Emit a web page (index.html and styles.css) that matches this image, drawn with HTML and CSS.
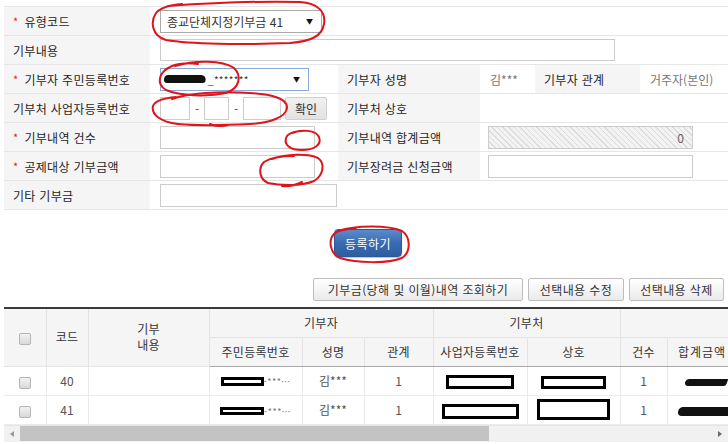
FILE: index.html
```html
<!DOCTYPE html>
<html lang="ko">
<head>
<meta charset="utf-8">
<title>기부금 입력</title>
<link rel="stylesheet" href="styles.css">
</head>
<body>
<div class="page">
  <table class="form">
    <colgroup>
      <col class="w-l1"><col class="w-v1"><col class="w-l2"><col class="w-v2"><col class="w-l3"><col class="w-v3">
    </colgroup>
    <tr class="r-first">
      <th><span class="req">*</span>유형코드</th>
      <td colspan="5"><div class="sel sel-type"><span>종교단체지정기부금 41</span><span class="arr">▼</span></div></td>
    </tr>
    <tr>
      <th>기부내용</th>
      <td colspan="5"><input class="inp inp-content" type="text"></td>
    </tr>
    <tr>
      <th><span class="req">*</span>기부자 주민등록번호</th>
      <td><div class="sel sel-id focus"><span class="redact-scribble"></span><span class="mask">_*******</span><span class="arr">▼</span></div></td>
      <th>기부자 성명</th>
      <td class="val">김***</td>
      <th>기부자 관계</th>
      <td class="val">거주자(본인)</td>
    </tr>
    <tr>
      <th>기부처 사업자등록번호</th>
      <td>
        <div class="bizno">
          <input class="inp b1" type="text"><span class="dash">-</span><input class="inp b2" type="text"><span class="dash">-</span><input class="inp b3" type="text"><button class="btn-chk">확인</button>
        </div>
      </td>
      <th>기부처 상호</th>
      <td colspan="3"></td>
    </tr>
    <tr>
      <th><span class="req">*</span>기부내역 건수</th>
      <td><input class="inp inp-mid" type="text"></td>
      <th>기부내역 합계금액</th>
      <td colspan="3" class="right-val"><div class="inp inp-right disabled">0</div></td>
    </tr>
    <tr>
      <th><span class="req">*</span>공제대상 기부금액</th>
      <td><input class="inp inp-mid" type="text"></td>
      <th>기부장려금 신청금액</th>
      <td colspan="3" class="right-val"><input class="inp inp-right" type="text"></td>
    </tr>
    <tr>
      <th>기타 기부금</th>
      <td colspan="5"><input class="inp inp-etc" type="text"></td>
    </tr>
  </table>

  <div class="submit-wrap"><button class="btn-primary">등록하기</button></div>

  <div class="actions">
    <button class="btn btn-wide">기부금(당해 및 이월)내역 조회하기</button>
    <button class="btn btn-edit">선택내용 수정</button>
    <button class="btn btn-del">선택내용 삭제</button>
  </div>

  <div class="grid-wrap">
    <table class="grid">
      <colgroup>
        <col class="g-chk"><col class="g-code"><col class="g-cont"><col class="g-id"><col class="g-name"><col class="g-rel"><col class="g-biz"><col class="g-corp"><col class="g-cnt"><col class="g-sum"><col class="g-ded"><col class="g-app"><col class="g-etc">
      </colgroup>
      <thead>
        <tr>
          <th rowspan="2"><span class="cb"></span></th>
          <th rowspan="2">코드</th>
          <th rowspan="2" class="two-line">기부<br>내용</th>
          <th colspan="3">기부자</th>
          <th colspan="2">기부처</th>
          <th colspan="4">기부내역</th>
          <th rowspan="2">비고</th>
        </tr>
        <tr>
          <th>주민등록번호</th>
          <th>성명</th>
          <th>관계</th>
          <th>사업자등록번호</th>
          <th>상호</th>
          <th>건수</th>
          <th class="sum-h">합계금액</th>
          <th>공제대상금액</th>
          <th>기부장려금</th>
        </tr>
      </thead>
      <tbody>
        <tr>
          <td><span class="cb"></span></td>
          <td>40</td>
          <td></td>
          <td><span class="idcell"><span class="box box-id1"></span><span class="dots">-***···</span></span></td>
          <td>김***</td>
          <td>1</td>
          <td><span class="box box-biz1"></span></td>
          <td><span class="box box-corp1"></span></td>
          <td>1</td>
          <td class="sumcell"><span class="scrib scrib1"></span></td>
          <td></td><td></td><td></td>
        </tr>
        <tr>
          <td><span class="cb"></span></td>
          <td>41</td>
          <td></td>
          <td><span class="idcell"><span class="box box-id2"></span><span class="dots">-***···</span></span></td>
          <td>김***</td>
          <td>1</td>
          <td><span class="box box-biz2"></span></td>
          <td><span class="box box-corp2"></span></td>
          <td>1</td>
          <td class="sumcell"><span class="scrib scrib2"></span></td>
          <td></td><td></td><td></td>
        </tr>
      </tbody>
    </table>
  </div>

  <div class="hscroll">
    <span class="sarrow left"></span>
    <div class="track"><div class="thumb"></div></div>
    <span class="sarrow right"></span>
  </div>

  <svg class="marks" width="728" height="444" viewBox="0 0 728 444">
    <g fill="none" stroke="#e0141b" stroke-width="2" stroke-linecap="round">
      <path d="M168 6 C210 3 262 1 300 2 C318 3 326 12 324 24 C322 36 312 41 290 43 C240 45 190 44 166 40 C152 36 150 22 156 13 C160 8 170 5 182 4"/>
      <path d="M175 66 C195 60 222 60 234 68 C242 76 240 88 226 93 C208 97 180 96 166 90 C156 84 158 72 172 66 C180 63 190 63 198 64"/>
      <path d="M172 99 C188 93 220 91 250 93 C272 94 288 99 287 108 C286 117 270 123 250 124 C230 125 200 126 178 124 C160 122 151 114 153 106 C155 100 166 98 176 97 M210 124 C214 126 222 127 228 125"/>
      <path d="M292 133 C302 129 316 130 319 137 C322 145 314 150 302 150 C290 150 284 145 286 138 C287 134 292 132 300 131"/>
      <path d="M272 159 C286 154 308 153 318 158 C325 163 324 175 314 181 C302 186 282 186 268 183 C259 179 258 168 264 162 C270 158 282 156 294 156 M282 186 C290 187 298 184 302 182"/>
      <path d="M338 231 C356 225 388 225 402 231 C411 237 411 252 402 258 C388 264 356 263 340 258 C330 254 328 240 334 234 C338 230 346 229 356 228"/>
    </g>
  </svg>
</div>
</body>
</html>
```

FILE: styles.css
```css
* { box-sizing: border-box; }

html, body {
  margin: 0;
  padding: 0;
  background: #ffffff;
}

body {
  font-family: "Noto Sans CJK KR", "Noto Sans", "Liberation Sans", sans-serif;
  font-size: 12px;
  color: #333;
  width: 728px;
  height: 444px;
  overflow: hidden;
}

.page {
  position: relative;
  padding: 6px 0 0 4px;
}

/* ---------- form ---------- */
.form {
  width: 724px;
  table-layout: fixed;
  border-collapse: collapse;
}
.w-l1 { width: 146px; }
.w-v1 { width: 188px; }
.w-l2 { width: 142px; }
.w-v2 { width: 55px; }
.w-l3 { width: 105px; }
.w-v3 { width: 88px; }

.form tr { height: 29px; }
.form th, .form td {
  padding: 0;
  border-top: 1px solid #e6e6e6;
  border-bottom: 1px solid #e6e6e6;
  text-align: left;
  vertical-align: middle;
  font-weight: normal;
  white-space: nowrap;
}
.form th {
  background: #f5f5f5;
  padding-left: 9px;
  color: #1f1f1f;
  letter-spacing: 0.3px;
}
.form td { padding-left: 10px; }
.form td.val { color: #777; padding-left: 10px; }
.form td.right-val { padding-left: 8px; }

.req {
  color: #d4262b;
  font-size: 11px;
  margin-right: 6px;
  display: inline-block;
  transform: translateY(-1px);
}

.inp {
  height: 23px;
  border: 1px solid #cccccc;
  background: #fff;
  font: inherit;
  padding: 0 4px;
  display: inline-block;
  vertical-align: middle;
}
.inp-content { width: 455px; height: 22px; }
.inp-mid { width: 155px; }
.inp-etc { width: 177px; }
.inp-right { width: 205px; }
.disabled {
  background: repeating-linear-gradient(45deg, #dcdcdc 0 1px, #f3f3f3 1px 4px);
  text-align: right;
  padding-right: 8px;
  line-height: 21px;
  color: #666;
}

.sel {
  height: 23px;
  border: 1px solid #aaaaaa;
  background: #fff;
  display: flex;
  align-items: center;
  padding: 0 8px 0 6px;
  color: #333;
}
.sel .arr { margin-left: auto; font-size: 7px; color: #111; }
.sel-type { width: 162px; }
.sel-id { width: 149px; padding-left: 3px; }
.sel.focus { border-color: #86a9d6; }
.redact-scribble {
  width: 42px;
  height: 8px;
  background: #111;
  border-radius: 3px 6px 2px 4px;
  transform: skewX(-15deg);
}
.mask { font-size: 10px; margin-left: 2px; letter-spacing: 0.3px; }

.bizno { display: flex; align-items: center; }
.bizno .b1 { width: 30px; }
.bizno .b2 { width: 25px; }
.bizno .b3 { width: 38px; }
.dash { width: 14px; text-align: center; color: #555; }
.btn-chk {
  margin-left: 4px;
  width: 42px;
  height: 23px;
  border: 1px solid #cfcfcf;
  background: linear-gradient(#f0f0f0, #e2e2e2);
  border-radius: 2px;
  font: inherit;
  color: #333;
  padding: 0;
}

/* ---------- buttons ---------- */
.submit-wrap {
  display: flex;
  justify-content: center;
  padding: 19px 0 0 0;
  margin-left: -4px;
}
.btn-primary {
  width: 68px;
  height: 28px;
  margin-left: 8px;
  border: 1px solid #2c5a98;
  border-radius: 4px;
  background: linear-gradient(#5a8ccc, #3a6bb0 50%, #2f5e9f);
  color: #fff;
  font: inherit;
  letter-spacing: 0.5px;
  box-shadow: 0 1px 1px rgba(0,0,0,0.25);
  padding: 0;
}

.actions {
  display: flex;
  justify-content: flex-end;
  gap: 5px;
  padding: 21px 4px 0 0;
}
.btn {
  height: 23px;
  padding: 0;
  border: 1px solid #bdbdbd;
  border-radius: 2px;
  background: linear-gradient(#ffffff, #eaeaea);
  font: inherit;
  color: #333;
  letter-spacing: 0.4px;
  white-space: nowrap;
}
.btn-wide { width: 210px; }
.btn-edit { width: 96px; }
.btn-del { width: 95px; }

/* ---------- grid ---------- */
.grid-wrap {
  margin-top: 6px;
  width: 724px;
  overflow: hidden;
}
.grid {
  width: 1062px;
  table-layout: fixed;
  border-collapse: collapse;
  border-top: 2px solid #3a3a3a;
}
.g-chk { width: 42px; }
.g-code { width: 42px; }
.g-cont { width: 121px; }
.g-id { width: 93px; }
.g-name { width: 62px; }
.g-rel { width: 69px; }
.g-biz { width: 94px; }
.g-corp { width: 93px; }
.g-cnt { width: 47px; }
.g-sum { width: 70px; }
.g-ded { width: 110px; }
.g-app { width: 120px; }
.g-etc { width: 99px; }

.grid th {
  background: #f5f5f5;
  font-weight: normal;
  color: #333;
  height: 29px;
  padding: 0;
  text-align: center;
  vertical-align: middle;
  border: 1px solid #e4e4e4;
  border-top: none;
  line-height: 16px;
  letter-spacing: 0.3px;
  white-space: nowrap;
}
.grid th.two-line { line-height: 16px; }
.grid th.sum-h { letter-spacing: 1px; }
.grid thead tr:last-child th { border-bottom: 1px solid #a8a8a8; }
.grid th:first-child, .grid td:first-child { border-left: none; }
.grid td {
  height: 29px;
  padding: 0;
  text-align: center;
  vertical-align: middle;
  border: 1px solid #ebebeb;
  color: #555;
}

.cb {
  display: inline-block;
  width: 12px;
  height: 12px;
  border: 1px solid #b5b5b5;
  border-radius: 2px;
  background: linear-gradient(#f2f2f2, #d9d9d9);
  vertical-align: middle;
}

.idcell { display: inline-flex; align-items: center; }
.dots { font-size: 9px; color: #777; letter-spacing: 0.5px; }
.box {
  display: inline-block;
  border: 3px solid #000;
  background: #fff;
  vertical-align: middle;
}
.box-id1 { width: 43px; height: 9px; }
.box-id2 { width: 44px; height: 8px; }
.box-biz1 { width: 68px; height: 14px; }
.box-biz2 { width: 77px; height: 15px; }
.box-corp1 { width: 65px; height: 13px; }
.box-corp2 { width: 73px; height: 21px; }

.sumcell { text-align: right; }
.scrib {
  display: inline-block;
  background: #111;
  border-radius: 4px 1px 3px 6px;
  transform: skewX(-20deg);
  vertical-align: middle;
}
.scrib1 { width: 42px; height: 7px; margin-right: -8px; }
.scrib2 { width: 56px; height: 9px; margin-right: -8px; }

/* ---------- scrollbar ---------- */
.hscroll {
  width: 724px;
  height: 17px;
  background: #f1f1f1;
  display: flex;
  align-items: center;
  border-top: 1px solid #e6e6e6;
}
.track { flex: 1; height: 15px; position: relative; }
.thumb {
  width: 469px;
  height: 15px;
  background: #c3c3c3;
}
.sarrow {
  width: 16px;
  height: 15px;
  display: flex;
  align-items: center;
  justify-content: center;
}
.sarrow::before {
  content: "";
  border-top: 3px solid transparent;
  border-bottom: 3px solid transparent;
}
.sarrow.left::before { border-right: 4px solid #9a9a9a; }
.sarrow.right::before { border-left: 4px solid #6a6a6a; }

/* ---------- annotations ---------- */
.marks {
  position: absolute;
  left: 0;
  top: 0;
  pointer-events: none;
}
```
